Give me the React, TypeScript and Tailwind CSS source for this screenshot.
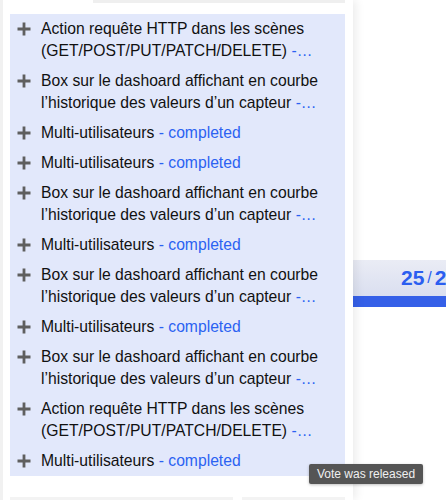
import React from 'react';

type Row = { lines: string[]; tail: string };

const BOX: Row = {
  lines: ['Box sur le dashoard affichant en courbe', 'l’historique des valeurs d’un capteur '],
  tail: '-…',
};
const ACTION: Row = {
  lines: ['Action requête HTTP dans les scènes', '(GET/POST/PUT/PATCH/DELETE) '],
  tail: '-…',
};
const MULTI: Row = { lines: ['Multi-utilisateurs'], tail: ' - completed' };

const rows: Row[] = [ACTION, BOX, MULTI, MULTI, BOX, MULTI, BOX, MULTI, BOX, ACTION, MULTI];

const PlusIcon = () => (
  <svg width="14" height="14" viewBox="0 0 14 14" className="shrink-0 mt-[4px]">
    <path d="M7 0.5v13M0.5 7h13" stroke="#5f5f5f" strokeWidth="2.8" fill="none" />
  </svg>
);

export default function App() {
  return (
    <div className="relative w-[446px] h-[500px] flex overflow-hidden bg-white text-[#111] font-['Liberation_Sans',Arial,sans-serif]">
      {/* left column */}
      <div className="relative z-10 w-[353px] shrink-0 border-l-[3px] border-[#f1f1f1] bg-white pl-[7px] pr-[8px] shadow-[3px_0_9px_rgba(0,0,0,0.08)]">
        <div className="flex gap-[10px] h-[3px]">
          <div className="w-[73px] bg-white" />
          <div className="flex-1 bg-[#efefef]" />
        </div>
        <div className="mt-[11px] bg-[#e2e8fb]">
          {rows.map((row, i) => (
            <div key={i} className="flex items-start gap-[10px] pl-[7px] py-[4px] text-[15.7px] leading-[22px]">
              <PlusIcon />
              <div>
                {row.lines.map((line, j) => (
                  <div key={j} className="whitespace-nowrap">
                    {line}
                    {j === row.lines.length - 1 && <span className="text-[#2b62f2]">{row.tail}</span>}
                  </div>
                ))}
              </div>
            </div>
          ))}
        </div>
        <div className="mt-[21px] flex gap-[9px] h-[6px]">
          <div className="w-[223px] bg-[#f3f3f3]" />
          <div className="flex-1 bg-[#f3f3f3]" />
        </div>
      </div>

      {/* right column */}
      <div className="flex-1 bg-white pt-[260px]">
        <div className="h-[36px] bg-gradient-to-b from-[#eaecf5] to-[#dadff0] pl-[48px] flex items-center whitespace-nowrap text-[#2b5ef0]">
          <span className="text-[21px] font-bold">25</span>
          <span className="text-[16px] mx-[3px]">/</span>
          <span className="text-[21px] font-bold">2</span>
        </div>
        <div className="h-[11px] bg-[#3560e8]" />
      </div>

      {/* tooltip */}
      <div className="absolute z-20 left-[309px] top-[464px] h-[20px] px-[8px] flex items-center bg-[#555555] text-[#f0f0f0] text-[12px] rounded-[2px] shadow-[0_1px_3px_rgba(0,0,0,0.25)] whitespace-nowrap">
        Vote was released
      </div>
    </div>
  );
}
